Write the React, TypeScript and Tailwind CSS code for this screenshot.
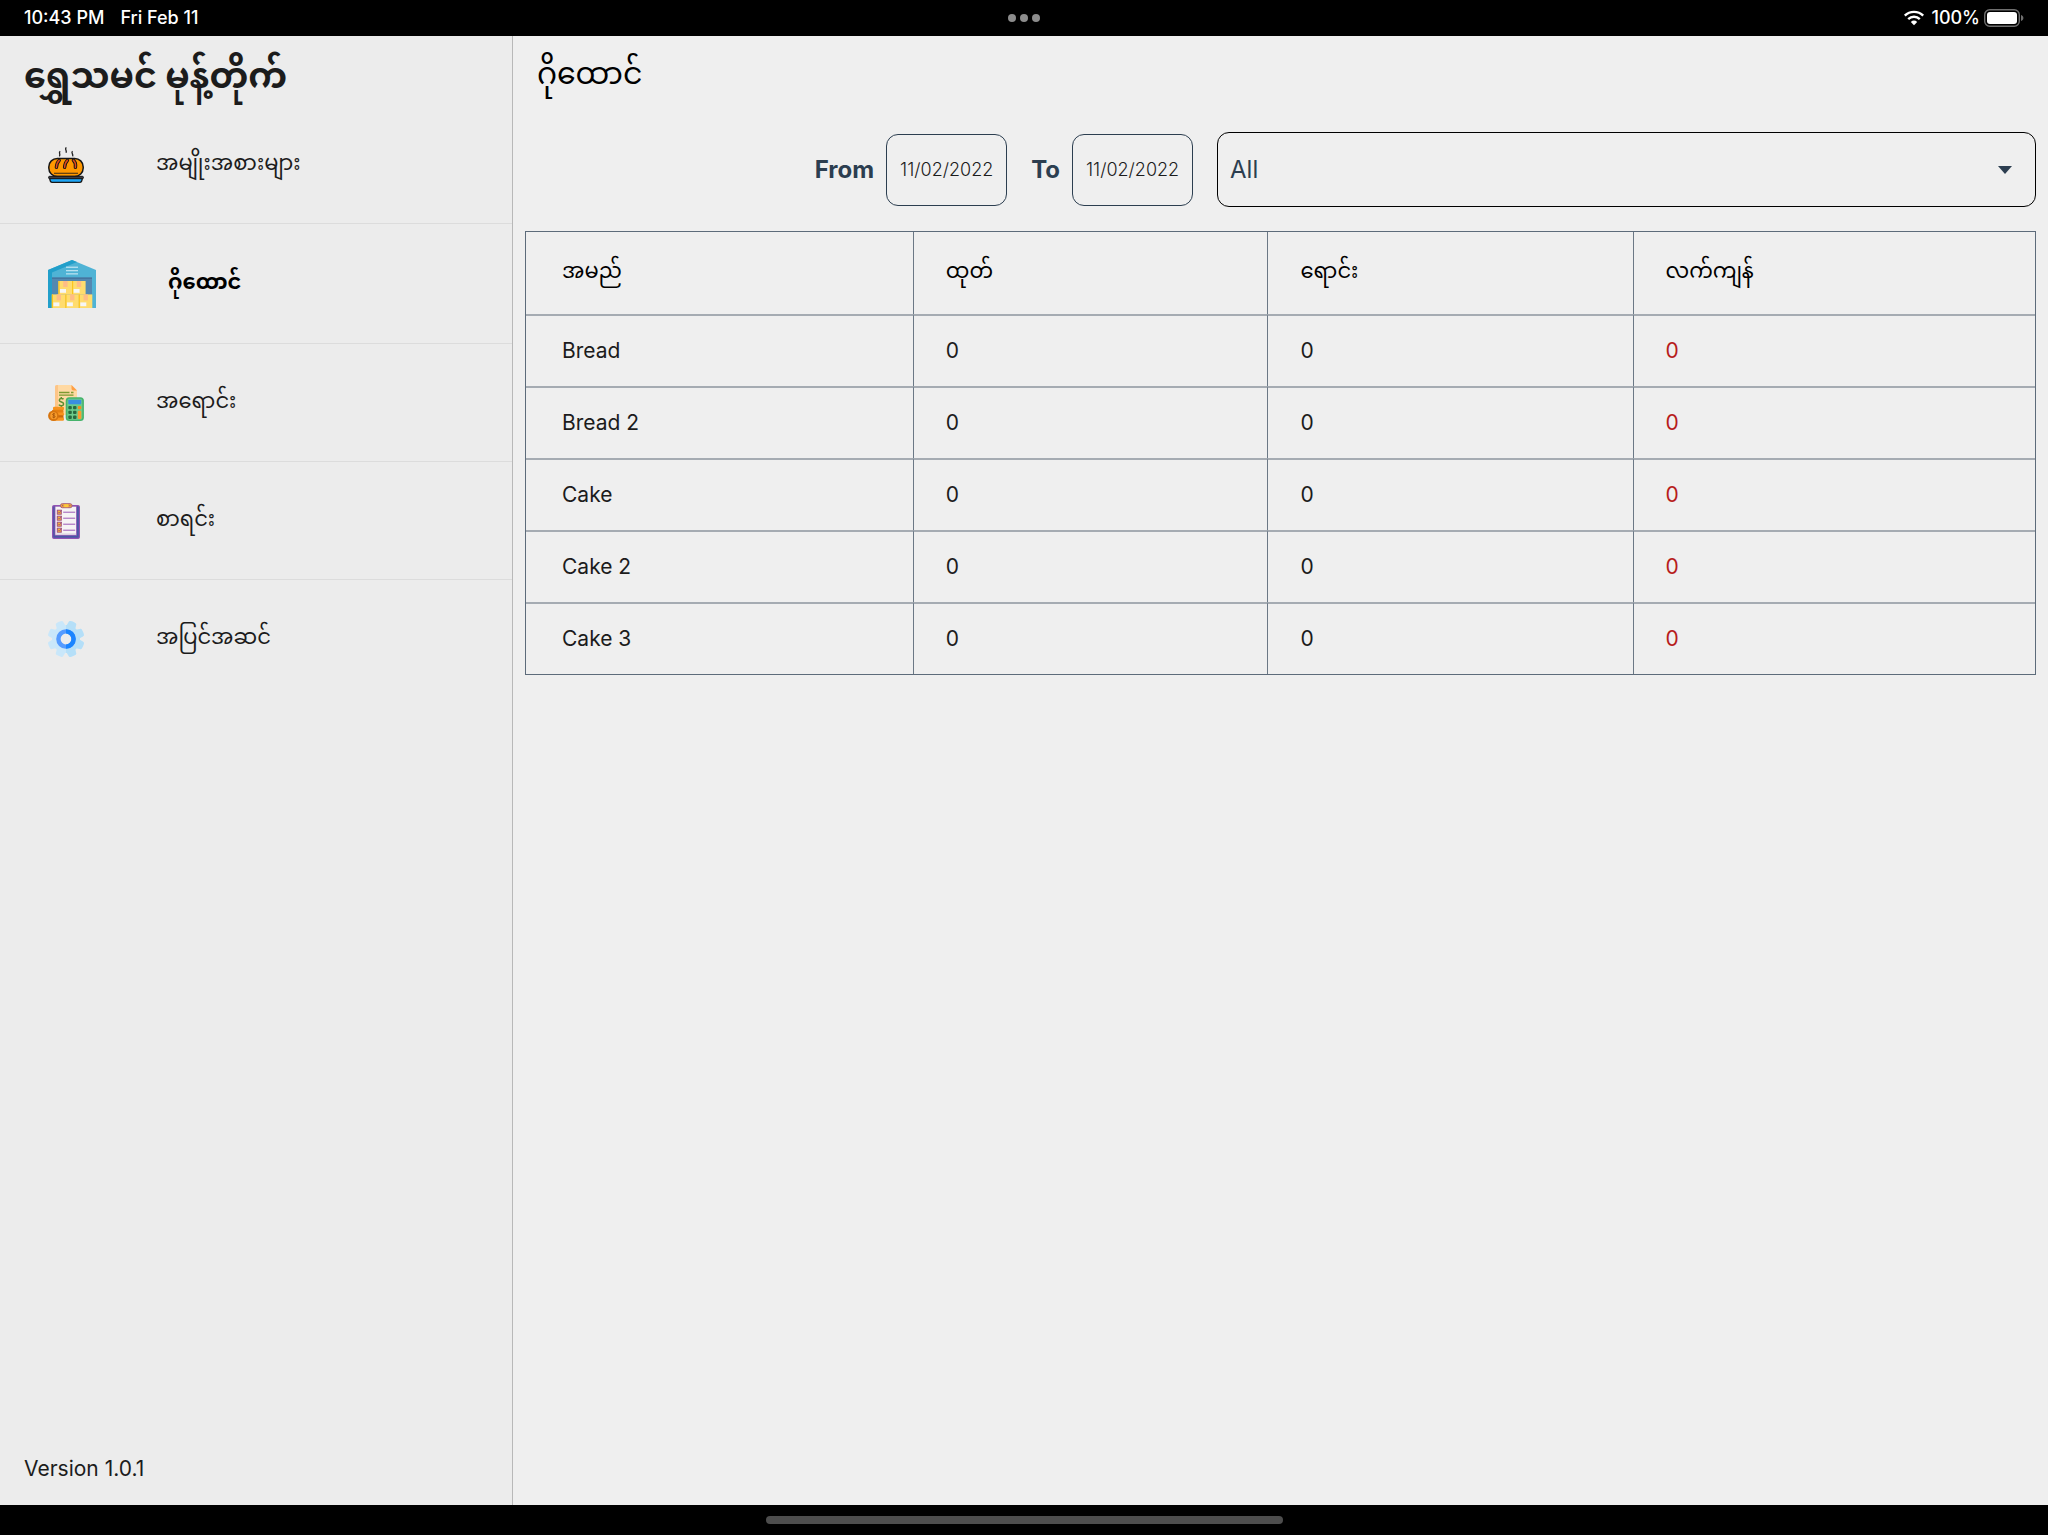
import type { ReactNode } from "react";

function WifiIcon() {
  return (
    <svg viewBox="0 0 22 16" className="h-4 w-[22px]" fill="none" aria-hidden="true">
      <path d="M1.8 5.6a13.2 13.2 0 0 1 18.4 0" stroke="#fff" strokeWidth="2.4" />
      <path d="M5.2 9.1a8.4 8.4 0 0 1 11.6 0" stroke="#fff" strokeWidth="2.4" />
      <path d="M7.8 11.9a4.7 4.7 0 0 1 6.4 0L11 15.2z" fill="#fff" />
    </svg>
  );
}

function BatteryIcon() {
  return (
    <svg viewBox="0 0 40 18" className="h-[18px] w-10" fill="none" aria-hidden="true">
      <rect x="0.7" y="0.7" width="34.6" height="16.6" rx="5" stroke="#6f6f6f" strokeWidth="1.4" />
      <rect x="3" y="3" width="30" height="12" rx="3" fill="#fff" />
      <path d="M37 6c1.6.6 2.4 1.7 2.4 3s-.8 2.4-2.4 3z" fill="#6f6f6f" />
    </svg>
  );
}

function BreadIcon() {
  return (
    <svg viewBox="0 0 36 36" className="size-9" fill="none" aria-hidden="true">
      <g stroke="#222" strokeWidth="1.3">
        <path d="M12.2 4.2c-2.2 1.5.8 2.8-.8 5.2" />
        <path d="M18.4.5c-2.2 1.5.8 2.8-.4 5.2" />
        <path d="M24.6 4.2c-2.2 1.5 1.2 2.8 0 5.2" />
      </g>
      <rect x=".8" y="11.4" width="34.4" height="18" rx="8.5" fill="#ff9800" stroke="#161616" strokeWidth="1.5" />
      <g stroke="#161616" strokeWidth="3.4" strokeLinecap="round">
        <path d="M11.2 13.4c-2 1.8-2.6 4.6-2.8 7" />
        <path d="M19.4 13.4c-2 1.8-2.6 4.6-2.8 7" />
        <path d="M25.4 13.4c1.800 1.500 2.400 4.500 2 7" />
      </g>
      <g stroke="#e0471b" strokeWidth="1.5" strokeLinecap="round">
        <path d="M11.2 13.4c-2 1.8-2.6 4.6-2.8 7" />
        <path d="M19.4 13.4c-2 1.8-2.6 4.6-2.8 7" />
        <path d="M25.4 13.4c1.800 1.500 2.400 4.500 2 7" />
      </g>
      <path d="M6 26.3h24" stroke="#5a3a10" strokeWidth="1.2" />
      <path d="M1.5 31h33l-.8 3c-.2.8-.8 1.3-1.700 1.300H4c-.9 0-1.500-.5-1.700-1.300z" fill="#1ea5f5" stroke="#161616" strokeWidth="1.3" />
      <rect x=".6" y="29.3" width="34.8" height="2.4" rx="1" fill="#3c3c44" stroke="#161616" strokeWidth="1" />
    </svg>
  );
}

function Crate({ x, y }: { x: number; y: number }) {
  return (
    <g>
      <rect x={x} y={y} width="13.6" height="13.6" fill="#ffdc6e" />
      <rect x={x} y={y} width="1.2" height="13.6" fill="#fbc61e" />
      <rect x={x + 4.8} y={y} width="4.4" height="6" fill="#ffbd86" />
      <rect x={x + 1.6} y={y + 8} width="6" height="3.8" fill="#f6f6f6" />
    </g>
  );
}

function WarehouseIcon() {
  return (
    <svg viewBox="0 0 48 48" className="size-12" aria-hidden="true">
      <path d="M0 10 24 0l24 10v38H0z" fill="#4fb3d5" />
      <path d="M0 10 24 0l5 2.1L4 12.5V48H0z" fill="#229fca" />
      <g fill="#b9e2f1">
        <rect x="18" y="6.6" width="12" height="1.3" />
        <rect x="18" y="10" width="12" height="1.3" />
        <rect x="18" y="13.2" width="12" height="1.3" />
      </g>
      <rect x="4" y="17.5" width="40" height="30.5" fill="#5388b1" />
      <rect x="4" y="17.5" width="40" height="1.5" fill="#45769f" />
      <Crate x={10.4} y={21} />
      <Crate x={24} y={21} />
      <Crate x={3.8} y={34.4} />
      <Crate x={17.3} y={34.4} />
      <Crate x={30.7} y={34.4} />
    </svg>
  );
}

function SalesIcon() {
  return (
    <svg viewBox="0 0 36 36" className="size-9" fill="none" aria-hidden="true">
      <path d="M9 0h14.5L29 5.5V30H7V2c0-1.2.8-2 2-2z" fill="#ffd9a3" />
      <path d="M7 2c0-1.2.8-2 2-2h1v30H7z" fill="#fdc587" />
      <path d="M23.5 0 29 5.5h-3.5c-1.2 0-2-.8-2-2z" fill="#ff9f45" />
      <path d="M11 7.5h10.5M23 7.5h2.5M11 10.2h14.5" stroke="#7c9a31" strokeWidth="1.3" />
      <path d="M15.5 14.2c-1-1.2-4.2-1-4.2 1 0 2.3 4.3 1.4 4.3 3.8 0 2.1-3.6 2.3-4.8.6M13.3 12v1.5M13.3 20.5v1.6" stroke="#5c8f2f" strokeWidth="1.5" />
      <g fill="#f7931e">
        <rect x="5" y="21.8" width="11" height="3.4" rx="1.2" />
        <rect x="4" y="24.7" width="11.5" height="3.4" rx="1.2" fill="#e57f10" />
        <rect x="5" y="27.5" width="11" height="3.4" rx="1.2" />
        <rect x="5" y="30.2" width="10.5" height="3.2" rx="1.2" fill="#c9690b" />
        <rect x="4.5" y="32.6" width="11.5" height="3.2" rx="1.2" />
      </g>
      <circle cx="5.4" cy="30.7" r="5.3" fill="#d6740e" />
      <circle cx="5.7" cy="30.7" r="3.4" fill="#f79b2b" />
      <path d="M7.1 29.2c-.8-.8-2.6-.6-2.5.4.1 1.2 2.5.7 2.5 2 0 1.1-2 1.2-2.7.3M5.8 28v5.4" stroke="#a8560a" strokeWidth=".9" />
      <rect x="17.7" y="12.3" width="18.2" height="23.7" rx="3.5" fill="#45b36b" />
      <rect x="19.3" y="13.7" width="15" height="21" rx="2.2" fill="#6bcb8b" />
      <rect x="20.3" y="14.7" width="13" height="4.6" rx=".8" fill="#3a8ee0" />
      <g fill="#27693f">
        <rect x="20.3" y="21" width="3.5" height="3.3" rx="1" />
        <rect x="25" y="21" width="3.5" height="3.3" rx="1" />
        <rect x="20.3" y="25.8" width="3.5" height="3.3" rx="1" />
        <rect x="25" y="25.8" width="3.5" height="3.3" rx="1" />
        <rect x="20.3" y="30.6" width="3.5" height="3.3" rx="1" />
        <rect x="25" y="30.6" width="3.5" height="3.3" rx="1" />
      </g>
      <rect x="29.8" y="21" width="3.5" height="3.3" rx="1" fill="#f58a1f" />
      <rect x="29.8" y="25.8" width="3.5" height="8.1" rx="1" fill="#f99b2f" />
    </svg>
  );
}

function ChecklistIcon() {
  return (
    <svg viewBox="0 0 36 36" className="size-9" fill="none" aria-hidden="true">
      <rect x="4.6" y="2.6" width="26.8" height="32.8" rx="1.5" fill="#4a57a5" stroke="#9254b3" strokeWidth="1.2" />
      <rect x="7" y="3.2" width="21.6" height="29" fill="#f6f3f4" stroke="#9254b3" strokeWidth=".8" />
      <path d="M7.5 31h20.7" stroke="#d9cfdd" strokeWidth="1" />
      {[7.2, 13.2, 19.2, 25.2].map((y) => (
        <g key={y}>
          <rect x="9.3" y={y} width="4" height="4" fill="#f7b534" stroke="#a3527c" strokeWidth="1" />
          <path d={`m10 ${y + 1.5} 1.3 1.3 2.5-3`} stroke="#9a4b86" strokeWidth=".8" />
          <path d={`M15.2 ${y + 2}h12`} stroke="#9b57b5" strokeWidth="1" />
        </g>
      ))}
      <rect x="12.5" y=".7" width="11.5" height="4" rx="1.8" fill="#f2a73b" stroke="#a85f7c" strokeWidth="1" />
      <rect x="16.2" y="1.2" width="4" height="3" fill="#fbc93d" />
      <circle cx="14.6" cy="2.7" r=".6" fill="#8b4a8b" />
      <circle cx="21.9" cy="2.7" r=".6" fill="#8b4a8b" />
    </svg>
  );
}

function GearIcon() {
  const angles = [22.5, 67.5, 112.5, 157.5, 202.5, 247.5, 292.5, 337.5];
  return (
    <svg viewBox="0 0 36 36" className="size-9" aria-hidden="true">
      <defs>
        <clipPath id="gear-right">
          <rect x="18" y="0" width="18" height="36" />
        </clipPath>
        <g id="gear-shape">
          <circle cx="18" cy="18" r="14" />
          {angles.map((angle) => (
            <path key={angle} d="M13.3 6 14 1.200Q14.200 0 15.200-.2 18-.7 20.800-.2q1 .2 1.200 1.400L22.700 6z" transform={`rotate(${angle} 18 18)`} />
          ))}
        </g>
      </defs>
      <use href="#gear-shape" fill="#c9e7fa" />
      <use href="#gear-shape" fill="#b5dff8" clipPath="url(#gear-right)" />
      <circle cx="18" cy="18" r="7.6" fill="#ececec" stroke="#559bff" strokeWidth="4.4" />
      <path d="M18 10.4a7.6 7.6 0 0 1 0 15.2" fill="none" stroke="#1a85ff" strokeWidth="4.4" />
    </svg>
  );
}

const navItems: { label: string; icon: ReactNode; active?: boolean }[] = [
  { label: "အမျိုးအစားများ", icon: <BreadIcon /> },
  { label: "ဂိုထောင်", icon: <WarehouseIcon />, active: true },
  { label: "အရောင်း", icon: <SalesIcon /> },
  { label: "စာရင်း", icon: <ChecklistIcon /> },
  { label: "အပြင်အဆင်", icon: <GearIcon /> },
];

const products = ["Bread", "Bread 2", "Cake", "Cake 2", "Cake 3"];

function StatusBar() {
  return (
    <header className="grid h-9 shrink-0 grid-cols-3 items-center bg-black px-6 text-lg leading-none font-medium text-white">
      <div className="flex gap-4">
        <span>10:43 PM</span>
        <span>Fri Feb 11</span>
      </div>
      <div className="flex justify-center gap-1">
        <span className="size-2 rounded-full bg-[#8c8c8c]" />
        <span className="size-2 rounded-full bg-[#8c8c8c]" />
        <span className="size-2 rounded-full bg-[#8c8c8c]" />
      </div>
      <div className="flex items-center justify-end">
        <WifiIcon />
        <span className="mr-1 ml-1.5">100%</span>
        <BatteryIcon />
      </div>
    </header>
  );
}

function Sidebar() {
  return (
    <aside className="flex w-1/4 shrink-0 flex-col bg-[#ececec] text-[#1c1c1c]">
      <h1 className="flex h-[70px] items-center px-6 pt-2 text-[35px] leading-none font-bold">ရွှေသမင် မုန့်တိုက်</h1>
      <nav className="flex flex-col">
        {navItems.map((item) => (
          <button
            key={item.label}
            type="button"
            aria-current={item.active ? "page" : undefined}
            className={
              item.active
                ? "flex h-[120px] items-center gap-[72px] border-b border-[#dcdcdc] pl-12 text-[21px] font-bold text-black"
                : "flex h-[118px] items-center gap-[72px] border-b border-[#dcdcdc] pl-12 text-[21px] last:border-b-0"
            }
          >
            {item.icon}
            <span className="pb-1">{item.label}</span>
          </button>
        ))}
      </nav>
      <p className="mt-auto px-6 pb-6 text-[21px] leading-6">Version 1.0.1</p>
    </aside>
  );
}

function DateField({ id, label }: { id: string; label: string }) {
  return (
    <div className="flex items-center gap-3">
      <label htmlFor={id} className="text-2xl font-bold text-[#2c3e50]">
        {label}
      </label>
      <input
        id={id}
        type="text"
        defaultValue="11/02/2022"
        className="h-[72px] w-[121px] rounded-xl border border-[#2c3e50] bg-transparent text-center text-lg font-light text-[#1c1c1c]"
      />
    </div>
  );
}

function StockTable() {
  const cell = "border-r border-[#6b7885] pl-8 text-left last:border-r-0 first:pl-9";
  return (
    <table className="w-full table-fixed border-separate border-spacing-0 border border-[#5d6b7a] text-[21px] text-[#1c1c1c]">
      <colgroup>
        <col className="w-[25.7%]" />
        <col className="w-[23.5%]" />
        <col className="w-[24.2%]" />
        <col />
      </colgroup>
      <thead>
        <tr className="h-[82px] text-black">
          {["အမည်", "ထုတ်", "ရောင်း", "လက်ကျန်"].map((title) => (
            <th key={title} scope="col" className={cell + " pb-1 font-normal"}>
              {title}
            </th>
          ))}
        </tr>
      </thead>
      <tbody>
        {products.map((name) => (
          <tr key={name} className="h-[72px]">
            <td className={cell + " border-t-2 border-t-[#a5abb2]"}>{name}</td>
            <td className={cell + " border-t-2 border-t-[#a5abb2]"}>0</td>
            <td className={cell + " border-t-2 border-t-[#a5abb2]"}>0</td>
            <td className={cell + " border-t-2 border-t-[#a5abb2] text-[#b71c1c]"}>0</td>
          </tr>
        ))}
      </tbody>
    </table>
  );
}

export default function App() {
  return (
    <div className="flex min-h-screen flex-col bg-[#efefef] font-['Inter','Noto_Sans_Myanmar',sans-serif]">
      <StatusBar />
      <div className="flex flex-1">
        <Sidebar />
        <main className="flex-1 border-l border-[#b8b8b8] px-3">
          <h2 className="flex h-[76px] items-center px-3 pb-0.5 text-[30px] leading-none text-black">ဂိုထောင်</h2>
          <div className="mt-5 mb-6 flex items-center justify-end gap-6">
            <DateField id="from" label="From" />
            <DateField id="to" label="To" />
            <div className="relative w-[54.2%]">
              <select
                aria-label="Category"
                className="h-[75px] w-full appearance-none rounded-xl border border-black bg-transparent px-3 text-2xl text-[#2c3e50]"
              >
                <option>All</option>
              </select>
              <svg viewBox="0 0 14 8" className="pointer-events-none absolute top-1/2 right-6 h-2 w-3.5 -translate-y-1/2" aria-hidden="true">
                <path d="M0 0h14L7 8z" fill="#2c3e50" />
              </svg>
            </div>
          </div>
          <StockTable />
        </main>
      </div>
      <footer className="flex h-[30px] shrink-0 items-center justify-center bg-black">
        <span className="h-2 w-[517px] rounded-full bg-[#4d4d4d]" />
      </footer>
    </div>
  );
}
